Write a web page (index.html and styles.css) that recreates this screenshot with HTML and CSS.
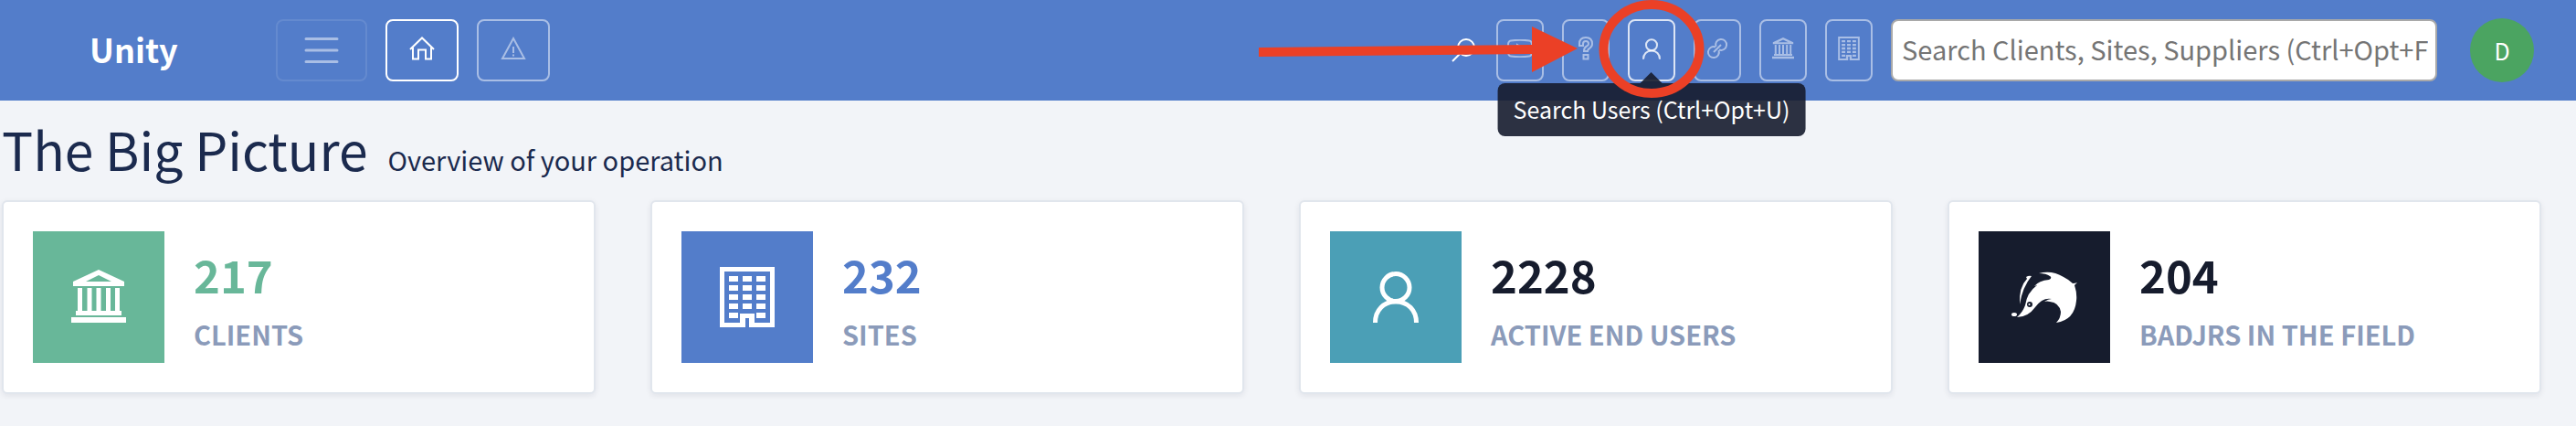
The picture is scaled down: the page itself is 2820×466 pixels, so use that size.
FILE: index.html
```
<!DOCTYPE html>
<html lang="en">
<head>
    <meta charset="UTF-8">
    <title>Unity</title>
    <link rel="stylesheet" href="styles.css">
</head>
<body>

<!-- shared icons -->
<svg class="sprite" aria-hidden="true">
    <symbol id="bank" viewBox="0 0 60 60">
        <path fill-rule="evenodd" d="M30 0L58 13V18H2V13ZM30 6L16 13H44Z"/>
        <path d="M7 20h5v25H7zM17.500 20h5v25h-5zM27.500 20h5v25h-5zM38 20h5v25h-5zM48 20h5v25h-5zM5 45h50v5H5zM0 52h60v6H0z"/>
    </symbol>
    <symbol id="building" viewBox="0 0 60 66">
        <path fill-rule="evenodd" d="M0 0H60V66H32V56H28V66H0ZM5 5V61H22V51H38V61H55V5Z"/>
        <path d="M10 10h10v6H10zM25 10h10v6H25zM40 10h10v6H40zM10 20h10v6H10zM25 20h10v6H25zM40 20h10v6H40zM10 30h10v6H10zM25 30h10v6H25zM40 30h10v6H40zM10 40h10v6H10zM25 40h10v6H25zM40 40h10v6H40zM10 50h10v6H10zM40 50h10v6H40z"/>
    </symbol>
    <symbol id="user" viewBox="0 0 50 56">
        <ellipse cx="25" cy="17.500" rx="15" ry="15" fill="none" stroke="currentColor" stroke-width="5"/>
        <path d="M2.500 56C2.500 42 12 33 25 33S47.500 42 47.500 56" fill="none" stroke="currentColor" stroke-width="5"/>
    </symbol>
</svg>

<header class="topbar">
    <div class="brand">Unity</div>
    <nav class="menu">
        <button type="button" class="btn btn-menu" aria-label="Menu">
            <svg width="38" height="30" viewBox="0 0 38 30"><path d="M2 2.500H36M2 15H36M2 27.500H36" fill="none" stroke="currentColor" stroke-width="3" stroke-linecap="round"/></svg>
        </button>
        <button type="button" class="btn btn-wide active" aria-label="Home">
            <svg width="28" height="26" viewBox="0 0 28 26"><path d="M1 14L14 1.500L27 14M4 12V24.500H10V14.500H18V24.500H24V12" fill="none" stroke="currentColor" stroke-width="2"/></svg>
        </button>
        <button type="button" class="btn btn-wide" aria-label="Alerts">
            <svg width="28" height="26" viewBox="0 0 28 26"><path d="M14 2L26 24H2Z" fill="none" stroke="currentColor" stroke-width="2"/><path d="M14 11V18M14 19.500V21.500" stroke="currentColor" stroke-width="2"/></svg>
        </button>
    </nav>

    <div class="search">
        <svg class="search-icon" width="28" height="28" viewBox="0 0 28 28"><circle cx="17" cy="11" r="9" fill="none" stroke="currentColor" stroke-width="2"/><path d="M10.500 17.500L2 26" stroke="currentColor" stroke-width="2"/></svg>
        <button type="button" class="btn" aria-label="Search Tickets">
            <svg width="28" height="20" viewBox="0 0 28 20"><path d="M4 1.500Q14 0 24 1.500Q27 2 27 6V14Q27 18 24 18.500Q14 20 4 18.500Q1 18 1 14V6Q1 2 4 1.500ZM11 6L18 10L11 14Z" fill="none" stroke="currentColor" stroke-width="2"/></svg>
        </button>
        <button type="button" class="btn" aria-label="Search Help">
            <svg width="18" height="26" viewBox="0 0 18 26"><path d="M2 10V8Q2 1 9 1T16 8Q16 11 13 13Q11 14 11 16H7Q7 12 10 10.500Q12 9.500 12 8Q12 5 9 5T6 8V10ZM6.500 20H11.500V24.500H6.500Z" fill="none" stroke="currentColor" stroke-width="2"/></svg>
        </button>
        <div class="users">
            <button type="button" class="btn btn-users" aria-label="Search Users" aria-describedby="users-tip">
                <svg width="20" height="23"><use href="#user"/></svg>
            </button>
            <div class="tooltip" id="users-tip" role="tooltip">Search Users (Ctrl+Opt+U)</div>
            <svg class="pointer" width="500" height="110" viewBox="0 0 500 110" aria-hidden="true">
                <path d="M8 52L307 49V29L357 53L307 79V59L8 62Z" fill="#eb4026"/>
                <ellipse cx="438" cy="53.500" rx="52.500" ry="48.500" fill="none" stroke="#eb4026" stroke-width="10"/>
            </svg>
        </div>
        <button type="button" class="btn" aria-label="Search Links">
            <svg width="26" height="26" viewBox="0 0 26 26"><g fill="none" stroke="currentColor" stroke-width="2"><path d="M11.500 11A6 6 0 1 1 15 14.500M11 11.500A6 6 0 1 0 14.500 15M9 17L17 9"/></g></svg>
        </button>
        <button type="button" class="btn" aria-label="Search Clients">
            <svg width="24" height="24"><use href="#bank"/></svg>
        </button>
        <button type="button" class="btn" aria-label="Search Sites">
            <svg width="24" height="26"><use href="#building"/></svg>
        </button>
        <input type="text" class="search-box" aria-label="Search" placeholder="Search Clients, Sites, Suppliers (Ctrl+Opt+F)">
    </div>
    <button type="button" class="avatar">D</button>
</header>

<main class="content">
    <div class="heading">
        <h1>The Big Picture</h1>
        <p>Overview of your operation</p>
    </div>

    <div class="cards">
        <section class="card">
            <div class="tile green"><svg width="60" height="60"><use href="#bank"/></svg></div>
            <div class="stat">
                <div class="number text-green">217</div>
                <h2>CLIENTS</h2>
            </div>
        </section>
        <section class="card">
            <div class="tile blue"><svg width="60" height="66"><use href="#building"/></svg></div>
            <div class="stat">
                <div class="number text-blue">232</div>
                <h2>SITES</h2>
            </div>
        </section>
        <section class="card">
            <div class="tile teal"><svg width="50" height="56"><use href="#user"/></svg></div>
            <div class="stat">
                <div class="number">2228</div>
                <h2>ACTIVE END USERS</h2>
            </div>
        </section>
        <section class="card">
            <div class="tile dark">
                <!-- badger -->
                <svg width="72" height="56" viewBox="0 0 72 56">
                    <path d="M30 2Q44-2 57 6Q63 9 67 13Q70 13 72 12Q70 14 69 15Q72 24 71 32Q69 53 49 56Q54 51 54 44Q52 34 42 33Q39 32 36 33Q40 30 44 30Q34 28 26 39Q18 50 6 50Q12 45 15 37Q17 23 28 15L25 16Q30 10 41 9Q45 7 42 5Q38 2 30 2Z"/>
                    <path d="M16 6Q19 4 22 5Q12 17 9 36Q8 17 17 8Z"/>
                    <ellipse cx="3" cy="47" rx="3" ry="2"/>
                    <circle cx="20" cy="36" r="3" fill="#161c2d"/>
                    <circle cx="19.500" cy="36" r="1"/>
                </svg>
            </div>
            <div class="stat">
                <div class="number">204</div>
                <h2>BADJRS IN THE FIELD</h2>
            </div>
        </section>
    </div>
</main>

</body>
</html>
```
FILE: styles.css
```
* {
    box-sizing: border-box;
}

body {
    margin: 0;
    background-color: #f2f4f8;
    color: #161c2d;
    font-family: "Noto Sans CJK SC", "Noto Sans", sans-serif;
}

svg {
    display: block;
    fill: currentColor;
}

.sprite {
    display: none;
}

/* top bar */
.topbar {
    display: flex;
    align-items: center;
    height: 110px;
    padding-right: 46px;
    background-color: #537dca;
    color: #fff;
}

.brand {
    width: 302px;
    padding: 0 0 4px 98px;
    font-size: 36px;
    font-weight: bold;
    line-height: 50px;
}

.menu,
.search {
    display: flex;
    align-items: center;
    gap: 20px;
}

.search {
    margin-left: auto;
}

.search-icon {
    margin-right: 2px;
}

.btn {
    display: flex;
    align-items: center;
    justify-content: center;
    width: 52px;
    height: 68px;
    padding: 0 0 4px;
    border: 2px solid rgba(255, 255, 255, 0.5);
    border-radius: 8px;
    background: none;
    color: rgba(255, 255, 255, 0.5);
}

.btn-menu {
    width: 100px;
    padding: 0;
    border-color: rgba(255, 255, 255, 0.1);
}

.btn-wide {
    width: 80px;
}

.btn.active {
    border-color: #fff;
    color: #fff;
}

.btn-users {
    border-color: rgba(255, 255, 255, 0.8);
    color: rgba(255, 255, 255, 0.8);
}

.search-box {
    width: 598px;
    height: 68px;
    padding: 0 8px 4px 10px;
    border: 2px solid #a9a9a9;
    border-radius: 8px;
    background-color: #fff;
    font-family: inherit;
    font-size: 29px;
}

.search-box::placeholder {
    color: #757575;
}

.avatar {
    width: 70px;
    height: 70px;
    margin-left: 36px;
    padding: 0;
    border: 0;
    border-radius: 50%;
    background-color: #4ba461;
    color: #fff;
    font-family: inherit;
    font-size: 25px;
}

/* tooltip and pointer lie over the bar */
.users {
    position: relative;
}

.tooltip {
    position: absolute;
    top: 70px;
    left: 50%;
    z-index: 1;
    padding: 8px 17px 10px;
    border-radius: 8px;
    background-color: rgba(22, 28, 45, 0.9);
    font-size: 25px;
    line-height: 40px;
    white-space: nowrap;
    transform: translateX(-50%);
}

.tooltip::before {
    content: "";
    position: absolute;
    bottom: 100%;
    left: 50%;
    margin-left: -12px;
    border: 12px solid transparent;
    border-top: 0;
    border-bottom-color: rgba(22, 28, 45, 0.9);
}

.pointer {
    position: absolute;
    top: -21px;
    right: -36px;
    z-index: 2;
    pointer-events: none;
}

/* page */
.content {
    padding: 15px 38px 36px 2px;
}

.heading {
    display: flex;
    align-items: baseline;
    gap: 22px;
    margin-bottom: 20px;
    color: #1b2a4e;
}

.heading h1 {
    margin: 0;
    font-size: 57px;
    font-weight: normal;
    line-height: 74px;
}

.heading p {
    margin: 0;
    font-size: 29px;
    line-height: 40px;
}

.cards {
    display: grid;
    grid-template-columns: repeat(4, 1fr);
    gap: 60px;
}

.card {
    display: flex;
    align-items: center;
    gap: 32px;
    padding: 32px;
    border: 2px solid #e1e6ed;
    border-radius: 6px;
    background-color: #fff;
    box-shadow: 0 2px 6px rgba(22, 28, 45, 0.08);
}

.tile {
    display: flex;
    align-items: center;
    justify-content: center;
    width: 144px;
    height: 144px;
    color: #fff;
}

.green { background-color: #68b799; }
.blue { background-color: #537dca; }
.teal { background-color: #4b9fb6; }
.dark { background-color: #161c2d; }

.number {
    font-size: 49px;
    font-weight: bold;
    line-height: 80px;
}

.text-green { color: #68b799; }
.text-blue { color: #537dca; }

.stat h2 {
    margin: 0;
    color: #8b9bba;
    font-size: 29px;
    font-weight: bold;
    line-height: 50px;
}
```
